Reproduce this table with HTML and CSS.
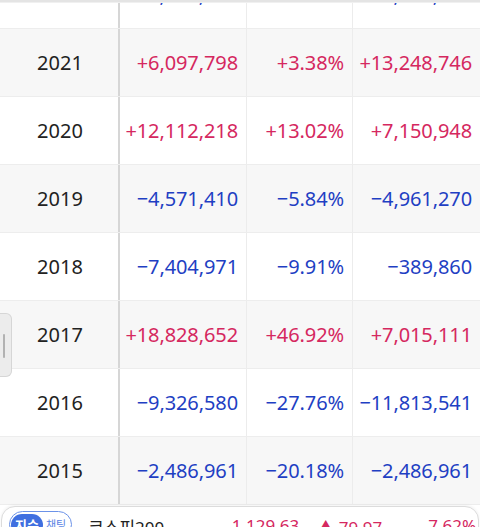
FILE: index.html
```html
<!DOCTYPE html>
<html lang="ko">
<head>
<meta charset="utf-8">
<link rel="stylesheet" href="styles.css">
</head>
<body>
<div class="page">
  <div class="top-edge"></div>
  <div class="table">
    <div class="row white">
      <div class="cell year">2022</div>
      <div class="cell num down">−8,152,437</div>
      <div class="cell num down">−3.17%</div>
      <div class="cell num down">−6,951,528</div>
    </div>
    <div class="row gray">
      <div class="cell year">2021</div>
      <div class="cell num up">+6,097,798</div>
      <div class="cell num up">+3.38%</div>
      <div class="cell num up">+13,248,746</div>
    </div>
    <div class="row white">
      <div class="cell year">2020</div>
      <div class="cell num up">+12,112,218</div>
      <div class="cell num up">+13.02%</div>
      <div class="cell num up">+7,150,948</div>
    </div>
    <div class="row gray">
      <div class="cell year">2019</div>
      <div class="cell num down">−4,571,410</div>
      <div class="cell num down">−5.84%</div>
      <div class="cell num down">−4,961,270</div>
    </div>
    <div class="row white">
      <div class="cell year">2018</div>
      <div class="cell num down">−7,404,971</div>
      <div class="cell num down">−9.91%</div>
      <div class="cell num down">−389,860</div>
    </div>
    <div class="row gray">
      <div class="cell year">2017</div>
      <div class="cell num up">+18,828,652</div>
      <div class="cell num up">+46.92%</div>
      <div class="cell num up">+7,015,111</div>
    </div>
    <div class="row white">
      <div class="cell year">2016</div>
      <div class="cell num down">−9,326,580</div>
      <div class="cell num down">−27.76%</div>
      <div class="cell num down">−11,813,541</div>
    </div>
    <div class="row gray">
      <div class="cell year">2015</div>
      <div class="cell num down">−2,486,961</div>
      <div class="cell num down">−20.18%</div>
      <div class="cell num down">−2,486,961</div>
    </div>
  </div>
  <div class="handle"></div>
  <div class="ticker">
    <div class="pill"><span class="pill-on">지수</span><span class="pill-off">채팅</span></div>
    <span class="t-name">코스피200</span>
    <span class="t-price">1,129.63</span>
    <span class="t-change">▲ 79.97</span>
    <span class="t-rate">7.62%</span>
  </div>
</div>
</body>
</html>
```
FILE: styles.css
```css
* { box-sizing: border-box; }
html, body {
  margin: 0;
  padding: 0;
  width: 480px;
  height: 527px;
  overflow: hidden;
  background: #fff;
  font-family: "Noto Sans", "Noto Sans CJK KR", sans-serif;
}
.page {
  position: relative;
  width: 480px;
  height: 527px;
  overflow: hidden;
}
.top-edge {
  position: sticky;
  top: 0;
  z-index: 2;
  height: 3px;
  background: #e4e4e4;
  border-bottom: 1px solid #f0f0f0;
}
.table {
  margin-top: -42px;
}
.row {
  display: grid;
  grid-template-columns: 120px 127px 106px 127px;
  height: 68px;
  border-bottom: 1px solid #ededed;
}
.row.gray { background: #f7f7f7; }
.row.white { background: #fff; }
.cell {
  display: flex;
  align-items: center;
  font-size: 20px;
  line-height: 1;
  border-right: 1px solid #ececec;
}
.cell:last-child { border-right: 0; }
.year {
  justify-content: center;
  color: #222;
  border-right: 2px solid #d6d6d6;
  padding-left: 2px;
}
.num {
  justify-content: flex-end;
  padding-right: 8px;
  letter-spacing: -0.1px;
}
.up { color: #d5285f; }
.down { color: #1f3fc3; }
.handle {
  position: absolute;
  left: 0;
  top: 313px;
  width: 12px;
  height: 64px;
  background: #ececec;
  border: 1px solid #d6d6d6;
  border-left: 0;
  border-radius: 0 6px 6px 0;
}
.handle::after {
  content: "";
  position: absolute;
  left: 3px;
  top: 20px;
  width: 2px;
  height: 24px;
  background: #b2b2b2;
  border-radius: 1px;
}
.ticker {
  position: absolute;
  left: 1px;
  right: 1px;
  top: 506px;
  height: 60px;
  background: #fff;
  border: 1px solid #dcdcdc;
  border-radius: 14px 14px 0 0;
  box-shadow: 0 -1px 3px rgba(0,0,0,0.05);
  display: flex;
  align-items: flex-start;
  padding: 4px 0 0 7px;
  white-space: nowrap;
}
.pill {
  display: flex;
  align-items: center;
  flex-shrink: 0;
  height: 27px;
  border: 1.5px solid #6b92e8;
  border-radius: 14px;
  padding: 1px 5px 1px 1px;
  white-space: nowrap;
}
.pill-on {
  background: #3f6fe0;
  color: #fff;
  font-size: 13px;
  font-weight: 700;
  border-radius: 11px;
  padding: 0 4px;
  line-height: 22px;
}
.pill-off {
  color: #5b84e4;
  font-size: 11px;
  padding-left: 3px;
  line-height: 20px;
}
.t-name {
  margin-left: 16px;
  margin-top: 3px;
  font-size: 17px;
  color: #222;
  width: 80px;
  flex-shrink: 0;
}
.t-price, .t-change, .t-rate {
  margin-top: 3px;
  font-size: 17px;
  color: #d5285f;
  text-align: right;
  flex-shrink: 0;
}
.t-price { width: 131px; }
.t-change { width: 83px; }
.t-rate { width: 94px; }
```
